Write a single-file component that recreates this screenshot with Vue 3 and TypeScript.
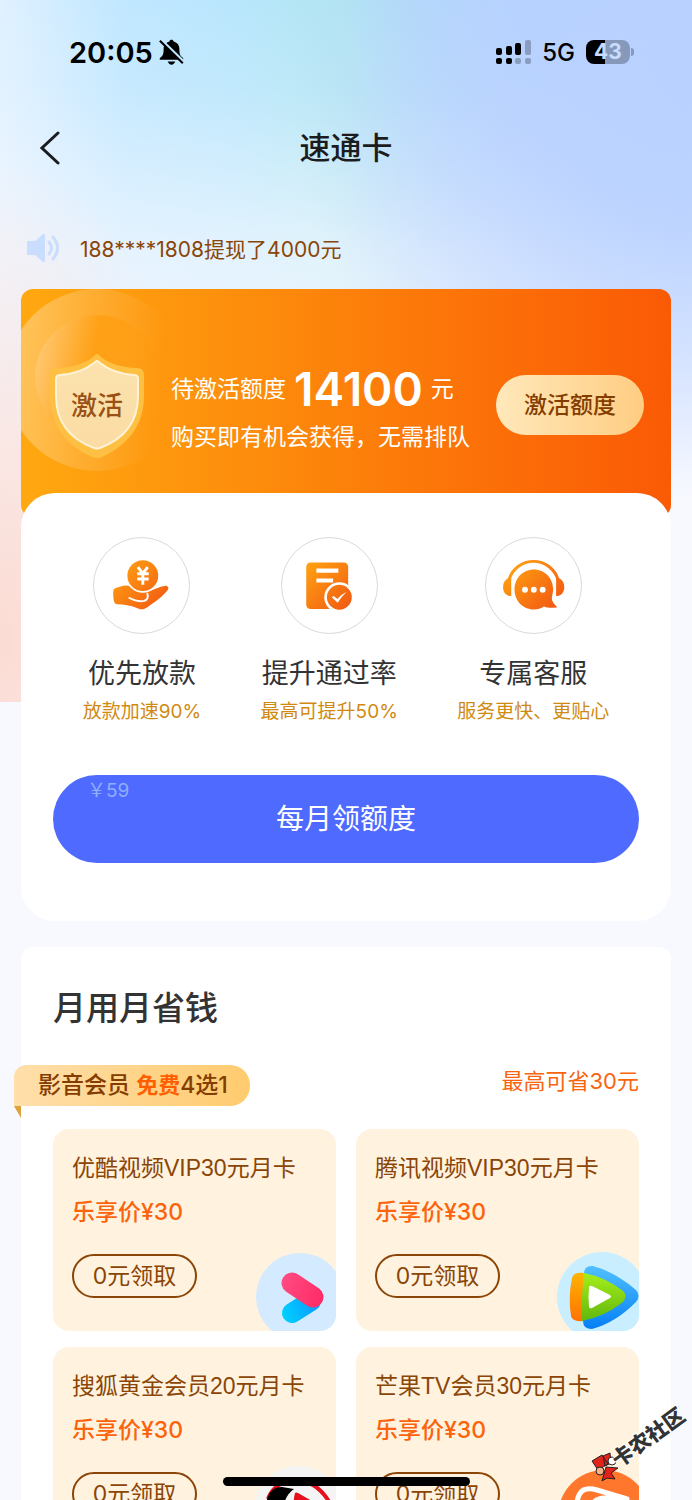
<script setup lang="ts">
interface Feature {
  icon: 'loan' | 'pass' | 'service'
  title: string
  note: string
}

interface Coupon {
  logo: 'youku' | 'tencent' | 'sohu' | 'mango'
  title: string
  price: string
}

const features: Feature[] = [
  { icon: 'loan', title: '优先放款', note: '放款加速90%' },
  { icon: 'pass', title: '提升通过率', note: '最高可提升50%' },
  { icon: 'service', title: '专属客服', note: '服务更快、更贴心' },
]

const coupons: Coupon[] = [
  { logo: 'youku', title: '优酷视频VIP30元月卡', price: '乐享价¥30' },
  { logo: 'tencent', title: '腾讯视频VIP30元月卡', price: '乐享价¥30' },
  { logo: 'sohu', title: '搜狐黄金会员20元月卡', price: '乐享价¥30' },
  { logo: 'mango', title: '芒果TV会员30元月卡', price: '乐享价¥30' },
]
</script>

<template>
  <div class="page">
    <div class="status">
      <div class="status-left">
        <span class="clock">20:05</span>
        <svg class="bell" viewBox="0 0 72 76" aria-hidden="true">
          <path d="M36 2c-3 0-6 2-6 5C18 10 13 19 13 29c0 14-2 20-10 26-3 3-2 6 2 6h62c4 0 5-3 2-6-8-6-10-12-10-26 0-10-5-19-17-22 0-3-3-5-6-5z" />
          <path d="M25 66h22c-2 6-6 9-11 9s-9-3-11-9z" />
          <path class="bell-gap" d="M4 0L72 66" />
          <path class="bell-slash" d="M2 5L69 71" />
        </svg>
      </div>
      <div class="status-right">
        <svg class="signal" viewBox="0 0 35 24" aria-hidden="true">
          <rect x="0" y="8" width="6" height="7" rx="2" />
          <rect x="10" y="6" width="6" height="9" rx="2" />
          <rect x="19" y="3" width="6" height="12" rx="2" />
          <rect x="29" y="0" width="6" height="15" rx="2" opacity=".25" />
          <rect x="0" y="18" width="6" height="6" rx="2" />
          <rect x="10" y="18" width="6" height="6" rx="2" />
          <rect x="19" y="18" width="6" height="6" rx="2" opacity=".25" />
          <rect x="29" y="18" width="6" height="6" rx="2" opacity=".25" />
        </svg>
        <span class="network">5G</span>
        <span class="battery"><span class="battery-body">43</span><span class="battery-nub"></span></span>
      </div>
    </div>

    <header class="nav">
      <button class="back" type="button" aria-label="返回">
        <svg viewBox="0 0 20 34" aria-hidden="true"><path d="M18 2L2 17l16 15" /></svg>
      </button>
      <h1>速通卡</h1>
    </header>

    <p class="notice">
      <svg viewBox="0 0 33 30" aria-hidden="true">
        <path class="horn" d="M1 8h7l8-7q2-1 2 1v26q0 2-2 1l-8-7H1q-1 0-1-1V9q0-1 1-1z" />
        <path class="wave" d="M22 9q5 6 0 12M26 4q9 11 0 22" />
      </svg>
      <span>188****1808提现了4000元</span>
    </p>

    <main>
      <section class="hero">
        <svg class="emblem" viewBox="0 0 150 182" role="img" aria-label="激活">
          <defs>
            <linearGradient id="ring" x1="0" y1=".4" x2="1" y2=".5">
              <stop offset="0" stop-color="#fff" stop-opacity=".34" />
              <stop offset=".45" stop-color="#fff" stop-opacity=".14" />
              <stop offset=".85" stop-color="#fff" stop-opacity="0" />
            </linearGradient>
            <linearGradient id="disc" x1="0" y1=".4" x2="1" y2=".6">
              <stop offset="0" stop-color="#ffc870" />
              <stop offset=".45" stop-color="#ff9e10" stop-opacity=".85" />
              <stop offset="1" stop-color="#ff9a0c" stop-opacity="0" />
            </linearGradient>
            <linearGradient id="shield" x1="0" y1="0" x2="0" y2="1">
              <stop offset="0" stop-color="#fbe2ae" />
              <stop offset="1" stop-color="#fbdca3" />
            </linearGradient>
          </defs>
          <circle cx="76" cy="91" r="91" fill="url(#ring)" />
          <circle cx="76" cy="88" r="62" fill="url(#disc)" />
          <path d="M76 65q2 0 4 3c9 7 22 11 36 11q7 0 7 7v21c0 31-18 50-42 61q-5 2-10 0C47 157 29 138 29 107V86q0-7 7-7c14 0 27-4 36-11q2-3 4-3z" fill="#fec042" />
          <path d="M76 72q1 0 3 2c10 8 20 11 34 12q4 0 4 4v17c0 26-14 43-38 52q-3 1-6 0C49 150 35 133 35 107V90q0-4 4-4c14-1 24-4 34-12q2-2 3-2z" fill="url(#shield)" stroke="#fff2d6" stroke-width="2" />
          <text class="emblem-text" x="76" y="126" text-anchor="middle">激活</text>
        </svg>
        <div class="hero-copy">
          <p class="quota">待激活额度<strong>14100</strong>元</p>
          <p>购买即有机会获得，无需排队</p>
        </div>
        <button class="activate" type="button">激活额度</button>
      </section>

      <section class="benefits">
        <ul class="features">
          <li v-for="feature in features" :key="feature.title">
            <svg class="feature-icon" viewBox="0 0 290 290" aria-hidden="true">
              <defs>
                <linearGradient :id="`warm-${feature.icon}`" gradientUnits="userSpaceOnUse" x1="75" y1="85" x2="205" y2="215">
                  <stop offset="0" stop-color="#ffa012" />
                  <stop offset="1" stop-color="#f25a12" />
                </linearGradient>
              </defs>
              <g v-if="feature.icon === 'loan'">
                <path :fill="`url(#warm-${feature.icon})`" d="M62 155c14-6 24-10 35-10 12 0 17 3 24 8 12 9 28 12 47 9 16-4 31-14 49-16 9 0 13 7 8 13-10 14-35 35-63 53-12 7-18 7-27 3-22-9-45-13-65-13q-7 0-9-8c-2-12-3-21-2-32q0-5 3-7z" />
                <path class="cut-line" d="M108 183c17 9 32 12 45 9 11-3 13-12 10-22" />
                <circle cx="149" cy="115" r="52" fill="#fff" />
                <circle cx="149" cy="115" r="47" :fill="`url(#warm-${feature.icon})`" />
                <path class="yen" d="M134 89l15 19 15-19M132 109h35M132 125h35M149 107v36" />
              </g>
              <g v-else-if="feature.icon === 'pass'">
                <rect x="74" y="75" width="128" height="142" rx="13" :fill="`url(#warm-${feature.icon})`" />
                <path fill="#fff" d="M105 93h67v13h-67zM105 124h51v12h-51z" />
                <circle cx="175" cy="181" r="46" fill="#fff" />
                <circle cx="175" cy="181" r="38" :fill="`url(#warm-${feature.icon})`" />
                <path fill="#fff" d="M152 181l6-4 11 9q12-14 28-21-15 13-27 33z" />
              </g>
              <g v-else>
                <path d="M70 128A78 78 0 0 1 220 128" fill="none" :stroke="`url(#warm-${feature.icon})`" stroke-width="9" />
                <path :fill="`url(#warm-${feature.icon})`" d="M77 117v60c-15 0-25-11-25-27 0-11 5-21 14-26zM214 117v60c15 0 25-11 25-27 0-11-5-21-14-26z" />
                <path :fill="`url(#warm-${feature.icon})`" d="M146 96c34 0 59 27 59 61 0 11-4 19-4 27 0 10 7 18 14 24 2 2 1 4-2 4-12 2-25 2-36-3-9 6-19 9-31 9-34 0-59-27-59-61s25-61 59-61z" />
                <path fill="#fff" d="M110 158a9 9 0 1 0 18 0 9 9 0 1 0-18 0zM137 158a9 9 0 1 0 18 0 9 9 0 1 0-18 0zM164 158a9 9 0 1 0 18 0 9 9 0 1 0-18 0z" />
              </g>
            </svg>
            <h2>{{ feature.title }}</h2>
            <p>{{ feature.note }}</p>
          </li>
        </ul>
        <button class="claim" type="button">
          <span class="claim-price">￥59</span>
          每月领额度
        </button>
      </section>

      <section class="savings">
        <h2>月用月省钱</h2>
        <div class="offer">
          <p class="ribbon">影音会员 <b>免费</b>4选1</p>
          <p class="saving">最高可省30元</p>
        </div>
        <ul class="coupons">
          <li v-for="coupon in coupons" :key="coupon.logo" class="coupon">
            <h3>{{ coupon.title }}</h3>
            <p>{{ coupon.price }}</p>
            <button type="button">0元领取</button>
            <svg class="logo" viewBox="0 0 84 84" aria-hidden="true">
              <g v-if="coupon.logo === 'youku'">
                <defs>
                  <linearGradient id="yk-blue" gradientUnits="userSpaceOnUse" x1="30" y1="66" x2="64" y2="54">
                    <stop offset="0" stop-color="#00d0ff" />
                    <stop offset="1" stop-color="#0a9cff" />
                  </linearGradient>
                  <linearGradient id="yk-pink" gradientUnits="userSpaceOnUse" x1="30" y1="36" x2="72" y2="54">
                    <stop offset="0" stop-color="#ff4a80" />
                    <stop offset="1" stop-color="#ff2a66" />
                  </linearGradient>
                </defs>
                <circle cx="48" cy="50" r="44" fill="#d3eaff" />
                <path d="M40 66L59 54" stroke="url(#yk-blue)" stroke-width="20" stroke-linecap="round" />
                <path d="M40 36L61 50" stroke="url(#yk-pink)" stroke-width="21" stroke-linecap="round" />
              </g>
              <g v-else-if="coupon.logo === 'tencent'">
                <defs>
                  <linearGradient id="tx-blue" x1="0" y1="0" x2="0" y2="1">
                    <stop offset="0" stop-color="#52c0ff" />
                    <stop offset="1" stop-color="#047ff5" />
                  </linearGradient>
                  <linearGradient id="tx-green" x1="0" y1="0" x2="0" y2="1">
                    <stop offset="0" stop-color="#a6ee1c" />
                    <stop offset="1" stop-color="#61b80c" />
                  </linearGradient>
                  <linearGradient id="tx-orange" x1="0" y1="0" x2="0" y2="1">
                    <stop offset="0" stop-color="#ffb400" />
                    <stop offset="1" stop-color="#ff7200" />
                  </linearGradient>
                </defs>
                <circle cx="47" cy="50" r="45" fill="#c8eeff" />
                <path fill="url(#tx-blue)" d="M29 27Q29 18 38 19 60 25 81 43q5 6 0 12Q60 76 37 82q-9 0-9-8z" />
                <path fill="url(#tx-orange)" d="M29 26q-11-1-12 5-4 19-1 38 1 6 12 5z" />
                <path fill="url(#tx-green)" d="M29 26q21 4 39 18 5 5 0 11-19 15-41 19-1-24 2-48z" />
                <path fill="#fff" d="M37 39l18 9q2 2 0 3l-18 10q-2 1-3-1-1-10 0-20 1-2 3-1z" />
              </g>
              <g v-else-if="coupon.logo === 'sohu'">
                <circle cx="46" cy="45" r="44" fill="#f4f4f4" />
                <path fill="none" stroke="#e60f1e" stroke-width="4" d="M16 34Q22 17 44 15 66 16 79 40" />
                <path d="M14 40q2-18 16-18l12 2q-9 6-11 20z" />
                <path fill="#e60f1e" d="M43 28q1-1 3 0l28 16H42q-1-8 1-16z" />
              </g>
              <g v-else>
                <circle cx="49" cy="51" r="46" fill="#ff762d" />
                <path class="mango-line" d="M23 46Q20 33 27 26q5-4 15-1l30 9M36 44q2-11 14-11h18" />
              </g>
            </svg>
          </li>
        </ul>
      </section>
    </main>

    <svg class="watermark" viewBox="0 0 110 90" role="img" aria-label="卡农社区">
      <g stroke="#222" stroke-width="1">
        <path fill="#e2231a" d="M10 59l10-6 6 9-10 6zM21 54l7-3 1 10-6 3zM24 65l12 1-7 5 4 6-8-1-5 3 2-7z" />
        <circle cx="30" cy="59" r="4" fill="#fff" />
        <circle cx="18" cy="69" r="4" fill="#f8b28a" />
      </g>
      <text transform="rotate(-36 66 35)" x="66" y="43" text-anchor="middle">卡农社区</text>
    </svg>
    <div class="home-indicator"></div>
  </div>
</template>

<style>
body {
  margin: 0;
  background: #f8f9ff;
}
</style>

<style scoped>
* {
  box-sizing: border-box;
}

h1,
h2,
h3,
p,
ul {
  margin: 0;
  padding: 0;
}

ul {
  list-style: none;
}

button {
  padding: 0 0 4px;
  border: 0;
  background: none;
  font-family: inherit;
  cursor: pointer;
}

svg {
  flex: none;
}

.page {
  position: relative;
  height: 100vh;
  overflow: hidden;
  color: #333;
  font-family: Inter, "Noto Sans CJK SC", sans-serif;
  background:
    radial-gradient(ellipse 32% 480px at 0 640px, #fbdbd2 0, #fbdbd200 100%),
    radial-gradient(ellipse 58% 420px at 100% 80px, #b8d1ff 0, #b8d1ffd9 35%, #b8d1ff00 100%),
    linear-gradient(180deg, #f8f9ff00 0, #f8f9ff22 90px, #f8f9ffaa 250px, #f8f9ff 480px),
    linear-gradient(90deg, #e0f1ff 0, #c0e7ff 18%, #b8e6fc 35%, #b1e6f1 50%, #b2d8fa 65%, #b4d3ff 75%, #b8d0ff 100%);
  background-color: #f8f9ff;
  background-repeat: no-repeat;
  background-size: 100% 702px;
}

.status {
  display: flex;
  align-items: center;
  justify-content: space-between;
  height: 104px;
  padding: 0 58px 0 69px;
  color: #000;
}

.status-left {
  display: flex;
  align-items: center;
  gap: 6px;
}

.clock {
  font-size: 29px;
  font-weight: 600;
}

.bell {
  width: 25px;
  height: 26px;
}

.bell-gap,
.bell-slash {
  stroke: #c0e8ff;
  stroke-width: 7;
}

.bell-slash {
  stroke: #000;
  stroke-width: 6;
}

.status-right {
  display: flex;
  align-items: center;
  gap: 11px;
}

.signal {
  width: 35px;
  height: 24px;
}

.network {
  font-size: 24px;
  font-weight: 500;
}

.battery {
  display: flex;
  align-items: center;
  gap: 1px;
}

.battery-body {
  width: 44px;
  border-radius: 8px;
  background: linear-gradient(90deg, #000 43%, #8699ba 43%);
  color: #c8dcff;
  font-size: 21px;
  font-weight: 700;
  line-height: 24px;
  text-align: center;
}

.battery-nub {
  width: 3px;
  height: 8px;
  border-radius: 0 4px 4px 0;
  background: #8699ba;
}

.nav {
  display: grid;
  grid-template-columns: 72px 1fr 72px;
  align-items: center;
  height: 88px;
}

.back {
  display: flex;
  justify-content: flex-end;
  padding: 0 12px;
}

.back svg {
  width: 20px;
  height: 34px;
  fill: none;
  stroke: #1c1c1e;
  stroke-width: 3;
  stroke-linecap: round;
}

h1 {
  color: #1c1c1e;
  font-size: 31px;
  font-weight: 500;
  line-height: 44px;
  text-align: center;
}

.notice {
  display: flex;
  align-items: center;
  gap: 20px;
  height: 57px;
  margin: 27px 27px 13px;
  color: #8a4507;
  font-size: 21px;
}

.notice svg {
  width: 33px;
  height: 30px;
}

.horn {
  fill: #c9deff;
}

.wave {
  fill: none;
  stroke: #c9deff;
  stroke-width: 3;
  stroke-linecap: round;
}

main {
  padding: 0 21px;
}

.hero {
  display: flex;
  align-items: flex-start;
  height: 228px;
  padding-right: 27px;
  border-radius: 12px;
  background: linear-gradient(90deg, #ffa810, #fa5a05);
  overflow: hidden;
}

.emblem {
  width: 150px;
  height: 182px;
}

.emblem-text {
  fill: #995115;
  font-size: 26px;
  font-weight: 500;
}

.hero-copy {
  flex: 1;
  margin-top: 76px;
  color: #fff;
  font-size: 23px;
  line-height: 48px;
  white-space: nowrap;
}

.quota {
  display: flex;
  align-items: center;
  gap: 8px;
}

.quota strong {
  font-size: 46px;
  font-weight: 600;
}

.activate {
  width: 148px;
  height: 60px;
  margin-top: 86px;
  border-radius: 30px;
  background: linear-gradient(90deg, #ffe8ba, #ffcd82);
  color: #843d00;
  font-size: 23px;
  font-weight: 500;
}

.benefits {
  position: relative;
  margin-top: -24px;
  padding: 44px 32px 58px;
  border-radius: 34px;
  background: #fff;
}

.features {
  display: flex;
  justify-content: space-around;
  text-align: center;
}

.feature-icon {
  display: block;
  width: 97px;
  height: 97px;
  margin: 0 auto;
  border: 1px solid #d9d9d9;
  border-radius: 50%;
}

.cut-line,
.yen {
  fill: none;
  stroke: #fff;
  stroke-width: 6;
  stroke-linecap: round;
}

.yen {
  stroke-width: 9;
  stroke-linecap: butt;
}

.features h2 {
  margin-top: 20px;
  font-size: 27px;
  font-weight: 400;
  line-height: 40px;
}

.features p {
  margin-top: 6px;
  color: #d08a12;
  font-size: 19px;
  line-height: 24px;
}

.claim {
  position: relative;
  width: 100%;
  height: 88px;
  margin-top: 51px;
  border-radius: 44px;
  background: #4e6aff;
  color: #fff;
  font-size: 28px;
}

.claim-price {
  position: absolute;
  top: 4px;
  left: 34px;
  color: #90adff;
  font-size: 19px;
  line-height: 24px;
}

.savings {
  margin-top: 26px;
  padding: 37px 32px 32px;
  border-radius: 12px;
  background: #fff;
}

.savings > h2 {
  font-size: 33px;
  font-weight: 500;
  line-height: 48px;
}

.offer {
  display: flex;
  align-items: flex-start;
  justify-content: space-between;
  margin: 33px 0 23px -39px;
}

.ribbon {
  position: relative;
  padding: 0 22px 0 24px;
  border-radius: 12px 20px 20px 0;
  background: linear-gradient(90deg, #ffdfab, #ffcb6e);
  color: #843d00;
  font-size: 23px;
  font-weight: 500;
  line-height: 41px;
}

.ribbon::after {
  content: "";
  position: absolute;
  top: 100%;
  left: 0;
  width: 7px;
  height: 12px;
  background: #dca23b;
  clip-path: polygon(0 0, 100% 0, 100% 100%);
}

.ribbon b {
  color: #ff5f00;
  font-size: 22px;
  font-weight: 700;
}

.saving {
  color: #f9640f;
  font-size: 22px;
  line-height: 32px;
}

.coupons {
  display: grid;
  grid-template-columns: 1fr 1fr;
  gap: 16px 20px;
}

.coupon {
  position: relative;
  padding: 24px 19px 33px;
  border-radius: 16px;
  background: #fff3df;
  overflow: hidden;
}

.coupon h3 {
  color: #8a4507;
  font-family: "Liberation Sans", "Noto Sans CJK SC", sans-serif;
  font-size: 23px;
  font-weight: 400;
  line-height: 30px;
  white-space: nowrap;
}

.coupon p {
  margin-top: 14px;
  color: #fb640c;
  font-size: 23px;
  font-weight: 500;
  line-height: 30px;
}

.coupon button {
  display: block;
  width: 125px;
  height: 44px;
  margin-top: 27px;
  border: 2px solid #8a4507;
  border-radius: 22px;
  color: #8a4507;
  font-size: 23px;
}

.logo {
  position: absolute;
  right: 0;
  bottom: 0;
  width: 84px;
  height: 84px;
}

.mango-line {
  fill: none;
  stroke: #fff;
  stroke-width: 5;
  stroke-linecap: round;
}

.watermark {
  position: absolute;
  right: 0;
  bottom: 8px;
  width: 110px;
  height: 90px;
}

.watermark text {
  fill: #333;
  stroke: #fff;
  stroke-width: 2;
  paint-order: stroke;
  font-size: 21px;
  font-weight: 900;
}

.home-indicator {
  position: absolute;
  right: 0;
  bottom: 14px;
  left: 0;
  width: 247px;
  height: 9px;
  margin: 0 auto;
  border-radius: 5px;
  background: #000;
}
</style>
